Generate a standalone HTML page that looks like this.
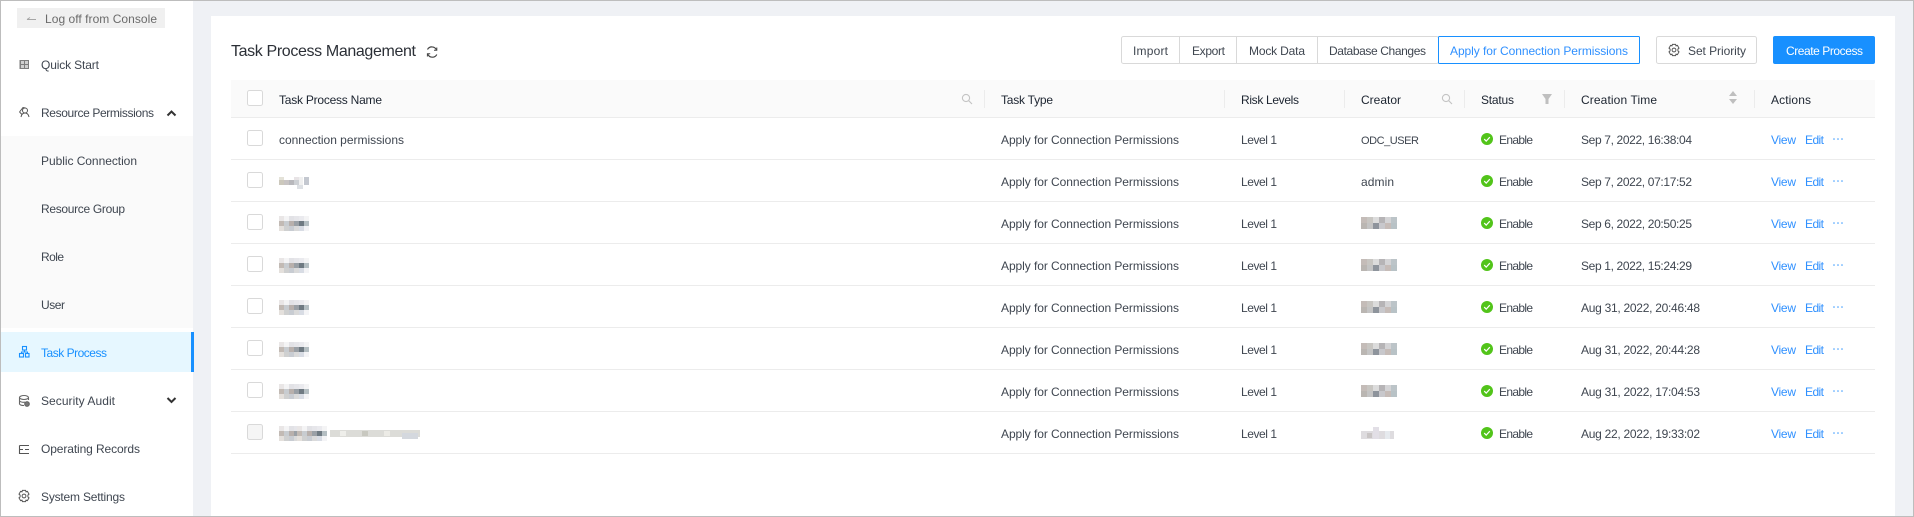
<!DOCTYPE html>
<html><head><meta charset="utf-8"><title>Task Process Management</title>
<style>
html,body{margin:0;padding:0;width:1914px;height:517px;overflow:hidden;background:#fff}
svg{display:block}
text{font-family:"Liberation Sans",sans-serif;font-size:12px;fill:#3a3f47}
.h{fill:#1c2430}
.s{fill:#3f4650}
.l{fill:#2f90ff}
.lg{stroke:#ececec;stroke-width:1}
.ic{fill:none;stroke:#555;stroke-width:1}
</style></head><body>
<svg width="1914" height="517" viewBox="0 0 1914 517" xmlns="http://www.w3.org/2000/svg" shape-rendering="geometricPrecision">
<defs>
<g id="ok"><circle cx="0" cy="0" r="6" fill="#52c41a"/><path d="M-2.8 0.1L-0.8 2.1L2.8-1.8" fill="none" stroke="#fff" stroke-width="1.2"/></g>
<g id="dots" fill="#3d9cff"><circle cx="1" cy="0" r=".8"/><circle cx="5" cy="0" r=".8"/><circle cx="9" cy="0" r=".8"/></g>
<g id="gear" fill="none" stroke="#555" stroke-width="1"><path d="M-1.6-5.6H1.6L2-4.1L3.4-4.6L5-1.9L3.9-.9V.9L5 1.9L3.4 4.6L2 4.1L1.6 5.6H-1.6L-2 4.1L-3.4 4.6L-5 1.9L-3.9.9V-.9L-5-1.9L-3.4-4.6L-2-4.1Z"/><circle r="1.9"/></g>
<g id="srch" fill="none" stroke="#c4c4c4" stroke-width="1.1"><circle cx="4" cy="4" r="3.6"/><path d="M6.7 6.7L10 10"/></g>
<g id="blurA">
<rect x="0" y="0" width="30" height="15" fill="#f4f4f5"/>
<rect x="0" y="0" width="5" height="5" fill="#e9e6e6"/><rect x="10" y="0" width="5" height="5" fill="#e2e2e6"/><rect x="15" y="0" width="5" height="5" fill="#e6e6ea"/><rect x="20" y="0" width="5" height="5" fill="#eaeaee"/>
<rect x="0" y="5" width="5" height="5" fill="#c2bab4"/><rect x="5" y="5" width="5" height="5" fill="#c8ccd0"/><rect x="10" y="5" width="5" height="5" fill="#b8b0ac"/><rect x="15" y="5" width="5" height="5" fill="#9aa0a6"/><rect x="20" y="5" width="5" height="5" fill="#6f7a82"/><rect x="25" y="5" width="5" height="5" fill="#b4bec2"/>
<rect x="0" y="10" width="5" height="5" fill="#e4e0dc"/><rect x="5" y="10" width="5" height="5" fill="#cfd0d0"/><rect x="10" y="10" width="5" height="5" fill="#c8ccd2"/><rect x="15" y="10" width="5" height="5" fill="#dadada"/><rect x="20" y="10" width="5" height="5" fill="#d8dce4"/><rect x="25" y="10" width="5" height="5" fill="#f4f4f6"/>
</g>
<g id="blurC">
<rect x="0" y="0" width="6" height="6" fill="#c4bcb8"/><rect x="6" y="0" width="6" height="6" fill="#c8c6c2"/><rect x="12" y="0" width="6" height="6" fill="#dcdcdc"/><rect x="18" y="0" width="6" height="6" fill="#b6b4b6"/><rect x="24" y="0" width="6" height="6" fill="#d4d4d6"/><rect x="30" y="0" width="6" height="6" fill="#bcc4c8"/>
<rect x="0" y="6" width="6" height="6" fill="#bab6b2"/><rect x="6" y="6" width="6" height="6" fill="#c4c4c4"/><rect x="12" y="6" width="6" height="6" fill="#8e949c"/><rect x="18" y="6" width="6" height="6" fill="#c8c8cc"/><rect x="24" y="6" width="6" height="6" fill="#c6bcb8"/><rect x="30" y="6" width="6" height="6" fill="#b8c2c6"/>
</g>
</defs>

<rect width="1914" height="517" fill="#eff1f5"/>
<rect x="1" y="1" width="192" height="515" fill="#fff"/>
<rect x="211" y="16" width="1684" height="500" fill="#fff"/>

<!-- sidebar -->
<rect x="17" y="8" width="148" height="20" fill="#f0f0f0"/>
<path d="M27 19.5H36M27 19.5L30 17.5" fill="none" stroke="#a6a6a6"/>
<text x="45" y="23" textLength="112" style="fill:#6b6b6b">Log off from Console</text>

<rect x="1" y="136" width="192" height="192" fill="#fafafa"/>
<rect x="1" y="332" width="190" height="40" fill="#e6f7ff"/>
<rect x="191" y="332" width="3" height="40" fill="#1890ff"/>

<rect x="19.500" y="60" width="9.500" height="9" fill="#7d7d7d"/>
<g fill="#cfcfcf"><rect x="21" y="61" width="3" height="3"/><rect x="25" y="61" width="3" height="3"/><rect x="21" y="65" width="3" height="3"/><rect x="25" y="65" width="3" height="3"/></g>
<text class="s" x="41" y="69" textLength="58">Quick Start</text>

<g class="ic"><circle cx="25" cy="110.500" r="2.500"/><path d="M21 117C21.500 114.500 23 113 25 113C27 113 28.500 114.500 29 117"/><path d="M19.500 112L23 107.500L25.500 108"/><path d="M19.500 112L22 114.500"/></g>
<text class="s" x="41" y="117" textLength="113">Resource Permissions</text>
<path d="M167.500 115.500L171.500 111.500L175.500 115.500" fill="none" stroke="#333" stroke-width="2"/>

<text class="s" x="41" y="165" textLength="96">Public Connection</text>
<text class="s" x="41" y="213" textLength="84">Resource Group</text>
<text class="s" x="41" y="261" textLength="23">Role</text>
<text class="s" x="41" y="309" textLength="24">User</text>

<g fill="none" stroke="#1890ff" stroke-width="1.1"><rect x="22.500" y="346.500" width="4" height="3.500"/><rect x="19.500" y="353.500" width="4" height="3.500"/><rect x="25.500" y="353.500" width="3.500" height="3.500"/><path d="M24.500 350V352H21.500V353.500M24.500 352H27.500V353.500"/></g>
<text x="41" y="357" textLength="66" style="fill:#1890ff">Task Process</text>

<g fill="none" stroke="#666" stroke-width="1.1"><ellipse cx="24" cy="397.500" rx="4.500" ry="2"/><path d="M19.500 397.500V404C20 405 22 405.500 24 405.500M28.500 397.500V400M19.500 401C21 402.500 24 402.500 25 402"/><circle cx="27" cy="404" r="2.300" fill="#777"/></g>
<text class="s" x="41" y="405" textLength="74">Security Audit</text>
<path d="M167.500 398L171.500 402L175.500 398" fill="none" stroke="#333" stroke-width="2"/>

<g fill="none" stroke="#555" stroke-width="1.1"><path d="M19.500 445.500H29M19.500 445.500V453.500H29M19.500 449.500H23M25 449.500H29M25 453.500H29"/></g>
<text class="s" x="41" y="453" textLength="99">Operating Records</text>

<use href="#gear" x="24" y="496"/>
<text class="s" x="41" y="501" textLength="84">System Settings</text>

<!-- title -->
<text x="231" y="56" textLength="185" style="font-size:16px;fill:#2b2f36">Task Process Management</text>
<g fill="none" stroke="#444" stroke-width="1.2"><path d="M427.500 49.500A5 5 0 0 1 436.500 50M436.800 54.500A5 5 0 0 1 427.700 54"/><path d="M436.800 47.500V50.300H434M427.400 56.500V53.700H430.200" stroke-width="1"/></g>

<!-- button group -->
<rect x="1121.500" y="36.500" width="317" height="27" rx="2" fill="#fff" stroke="#d9d9d9"/>
<path d="M1179.500 36V64M1236.500 36V64M1317.500 36V64" stroke="#d9d9d9"/>
<rect x="1438.500" y="36.500" width="201" height="27" fill="#fff" stroke="#1890ff" rx="1"/>
<text class="s" x="1133" y="55" textLength="35">Import</text>
<text class="s" x="1192" y="55" textLength="33">Export</text>
<text class="s" x="1249" y="55" textLength="56">Mock Data</text>
<text class="s" x="1329" y="55" textLength="97">Database Changes</text>
<text x="1450" y="55" textLength="178" style="fill:#2f90ff">Apply for Connection Permissions</text>

<rect x="1656.500" y="36.500" width="100" height="27" rx="2" fill="#fff" stroke="#d9d9d9"/>
<use href="#gear" x="1674" y="50"/>
<text class="s" x="1688" y="55" textLength="58">Set Priority</text>

<rect x="1773" y="36" width="102" height="28" rx="2" fill="#1890ff"/>
<text x="1786" y="55" textLength="77" style="fill:#fff">Create Process</text>

<!-- table header -->
<rect x="231" y="80" width="1644" height="37" fill="#fafafa"/>
<g class="lg"><path d="M231 117.500H1875M231 159.500H1875M231 201.500H1875M231 243.500H1875M231 285.500H1875M231 327.500H1875M231 369.500H1875M231 411.500H1875M231 453.500H1875"/></g>
<g class="lg"><path d="M984.500 90V108M1224.500 90V108M1344.500 90V108M1464.500 90V108M1564.500 90V108M1754.500 90V108"/></g>
<use href="#srch" x="962" y="94"/>
<use href="#srch" x="1442" y="94"/>
<path d="M1542 94H1552L1548.500 99V104H1545.500V99Z" fill="#bfbfbf"/>
<path d="M1733 91L1737 96H1729ZM1733 104L1737 99H1729Z" fill="#bfbfbf"/>

<text class="h" x="279" y="104" textLength="103">Task Process Name</text>
<text class="h" x="1001" y="104" textLength="52">Task Type</text>
<text class="h" x="1241" y="104" textLength="58">Risk Levels</text>
<text class="h" x="1361" y="104" textLength="40">Creator</text>
<text class="h" x="1481" y="104" textLength="33">Status</text>
<text class="h" x="1581" y="104" textLength="76">Creation Time</text>
<text class="h" x="1771" y="104" textLength="40">Actions</text>

<!-- checkboxes -->
<g fill="#fff" stroke="#d9d9d9">
<rect x="247.500" y="90.500" width="15" height="15" rx="2"/>
<rect x="247.500" y="130.500" width="15" height="15" rx="2"/>
<rect x="247.500" y="172.500" width="15" height="15" rx="2"/>
<rect x="247.500" y="214.500" width="15" height="15" rx="2"/>
<rect x="247.500" y="256.500" width="15" height="15" rx="2"/>
<rect x="247.500" y="298.500" width="15" height="15" rx="2"/>
<rect x="247.500" y="340.500" width="15" height="15" rx="2"/>
<rect x="247.500" y="382.500" width="15" height="15" rx="2"/>
<rect x="247.500" y="424.500" width="15" height="15" rx="2" fill="#f5f5f5"/>
</g>

<!-- names -->
<text class="s" x="279" y="144" textLength="125">connection permissions</text>
<g>
<rect x="279" y="177" width="5" height="3" fill="#e4e2d8"/><rect x="294" y="177" width="5" height="3" fill="#e8e4e6"/>
<rect x="279" y="180" width="5" height="5" fill="#ccc8bc"/><rect x="284" y="180" width="5" height="5" fill="#c8c4c4"/><rect x="289" y="180" width="5" height="5" fill="#b8b8bc"/><rect x="294" y="180" width="5" height="5" fill="#cdd0d4"/><rect x="299" y="177" width="4" height="8" fill="#f0f0f0"/><rect x="304" y="177" width="5" height="8" fill="#c4c8d0"/><rect x="297" y="185" width="6" height="4" fill="#dde0e4"/>
</g>
<use href="#blurA" x="279" y="216"/>
<use href="#blurA" x="279" y="258"/>
<use href="#blurA" x="279" y="300"/>
<use href="#blurA" x="279" y="342"/>
<use href="#blurA" x="279" y="384"/>
<g>
<use href="#blurA" x="279" y="426"/>
<use href="#blurA" x="297" y="426"/>
<rect x="330" y="430" width="90" height="7" fill="#dcdcd8"/>
<rect x="340" y="431" width="6" height="5" fill="#eeeeea"/><rect x="362" y="431" width="6" height="5" fill="#c8c8c0"/><rect x="384" y="431" width="6" height="5" fill="#ecebe6"/><rect x="402" y="433" width="16" height="6" fill="#d4d8de"/>
</g>

<!-- task type + levels -->
<g>
<text class="s" x="1001" y="144" textLength="178">Apply for Connection Permissions</text>
<text class="s" x="1001" y="186" textLength="178">Apply for Connection Permissions</text>
<text class="s" x="1001" y="228" textLength="178">Apply for Connection Permissions</text>
<text class="s" x="1001" y="270" textLength="178">Apply for Connection Permissions</text>
<text class="s" x="1001" y="312" textLength="178">Apply for Connection Permissions</text>
<text class="s" x="1001" y="354" textLength="178">Apply for Connection Permissions</text>
<text class="s" x="1001" y="396" textLength="178">Apply for Connection Permissions</text>
<text class="s" x="1001" y="438" textLength="178">Apply for Connection Permissions</text>
<text class="s" x="1241" y="144" textLength="36">Level 1</text>
<text class="s" x="1241" y="186" textLength="36">Level 1</text>
<text class="s" x="1241" y="228" textLength="36">Level 1</text>
<text class="s" x="1241" y="270" textLength="36">Level 1</text>
<text class="s" x="1241" y="312" textLength="36">Level 1</text>
<text class="s" x="1241" y="354" textLength="36">Level 1</text>
<text class="s" x="1241" y="396" textLength="36">Level 1</text>
<text class="s" x="1241" y="438" textLength="36">Level 1</text>
</g>

<!-- creators -->
<text class="s" x="1361" y="144" textLength="58" style="font-size:11px">ODC_USER</text>
<text class="s" x="1361" y="186" textLength="33">admin</text>
<use href="#blurC" x="1361" y="217"/>
<use href="#blurC" x="1361" y="259"/>
<use href="#blurC" x="1361" y="301"/>
<use href="#blurC" x="1361" y="343"/>
<use href="#blurC" x="1361" y="385"/>
<g><rect x="1361" y="431" width="33" height="8" fill="#dedcdf"/><rect x="1373" y="427" width="6" height="12" fill="#e2dfe6"/><rect x="1367" y="433" width="5" height="5" fill="#c9c5c5"/><rect x="1385" y="431" width="5" height="8" fill="#e6eaee"/></g>

<!-- status -->
<use href="#ok" x="1487" y="139"/><text class="s" x="1499" y="144" textLength="34">Enable</text>
<use href="#ok" x="1487" y="181"/><text class="s" x="1499" y="186" textLength="34">Enable</text>
<use href="#ok" x="1487" y="223"/><text class="s" x="1499" y="228" textLength="34">Enable</text>
<use href="#ok" x="1487" y="265"/><text class="s" x="1499" y="270" textLength="34">Enable</text>
<use href="#ok" x="1487" y="307"/><text class="s" x="1499" y="312" textLength="34">Enable</text>
<use href="#ok" x="1487" y="349"/><text class="s" x="1499" y="354" textLength="34">Enable</text>
<use href="#ok" x="1487" y="391"/><text class="s" x="1499" y="396" textLength="34">Enable</text>
<use href="#ok" x="1487" y="433"/><text class="s" x="1499" y="438" textLength="34">Enable</text>

<!-- dates -->
<text class="s" x="1581" y="144" textLength="111">Sep 7, 2022, 16:38:04</text>
<text class="s" x="1581" y="186" textLength="111">Sep 7, 2022, 07:17:52</text>
<text class="s" x="1581" y="228" textLength="111">Sep 6, 2022, 20:50:25</text>
<text class="s" x="1581" y="270" textLength="111">Sep 1, 2022, 15:24:29</text>
<text class="s" x="1581" y="312" textLength="119">Aug 31, 2022, 20:46:48</text>
<text class="s" x="1581" y="354" textLength="119">Aug 31, 2022, 20:44:28</text>
<text class="s" x="1581" y="396" textLength="119">Aug 31, 2022, 17:04:53</text>
<text class="s" x="1581" y="438" textLength="119">Aug 22, 2022, 19:33:02</text>

<!-- actions -->
<g>
<text class="l" x="1771" y="144" textLength="25">View</text><text class="l" x="1805" y="144" textLength="19">Edit</text><use href="#dots" x="1833" y="139"/>
<text class="l" x="1771" y="186" textLength="25">View</text><text class="l" x="1805" y="186" textLength="19">Edit</text><use href="#dots" x="1833" y="181"/>
<text class="l" x="1771" y="228" textLength="25">View</text><text class="l" x="1805" y="228" textLength="19">Edit</text><use href="#dots" x="1833" y="223"/>
<text class="l" x="1771" y="270" textLength="25">View</text><text class="l" x="1805" y="270" textLength="19">Edit</text><use href="#dots" x="1833" y="265"/>
<text class="l" x="1771" y="312" textLength="25">View</text><text class="l" x="1805" y="312" textLength="19">Edit</text><use href="#dots" x="1833" y="307"/>
<text class="l" x="1771" y="354" textLength="25">View</text><text class="l" x="1805" y="354" textLength="19">Edit</text><use href="#dots" x="1833" y="349"/>
<text class="l" x="1771" y="396" textLength="25">View</text><text class="l" x="1805" y="396" textLength="19">Edit</text><use href="#dots" x="1833" y="391"/>
<text class="l" x="1771" y="438" textLength="25">View</text><text class="l" x="1805" y="438" textLength="19">Edit</text><use href="#dots" x="1833" y="433"/>
</g>

<!-- outer frame -->
<rect x=".5" y=".5" width="1913" height="516" fill="none" stroke="#bdbdbd"/>
</svg>
</body></html>
